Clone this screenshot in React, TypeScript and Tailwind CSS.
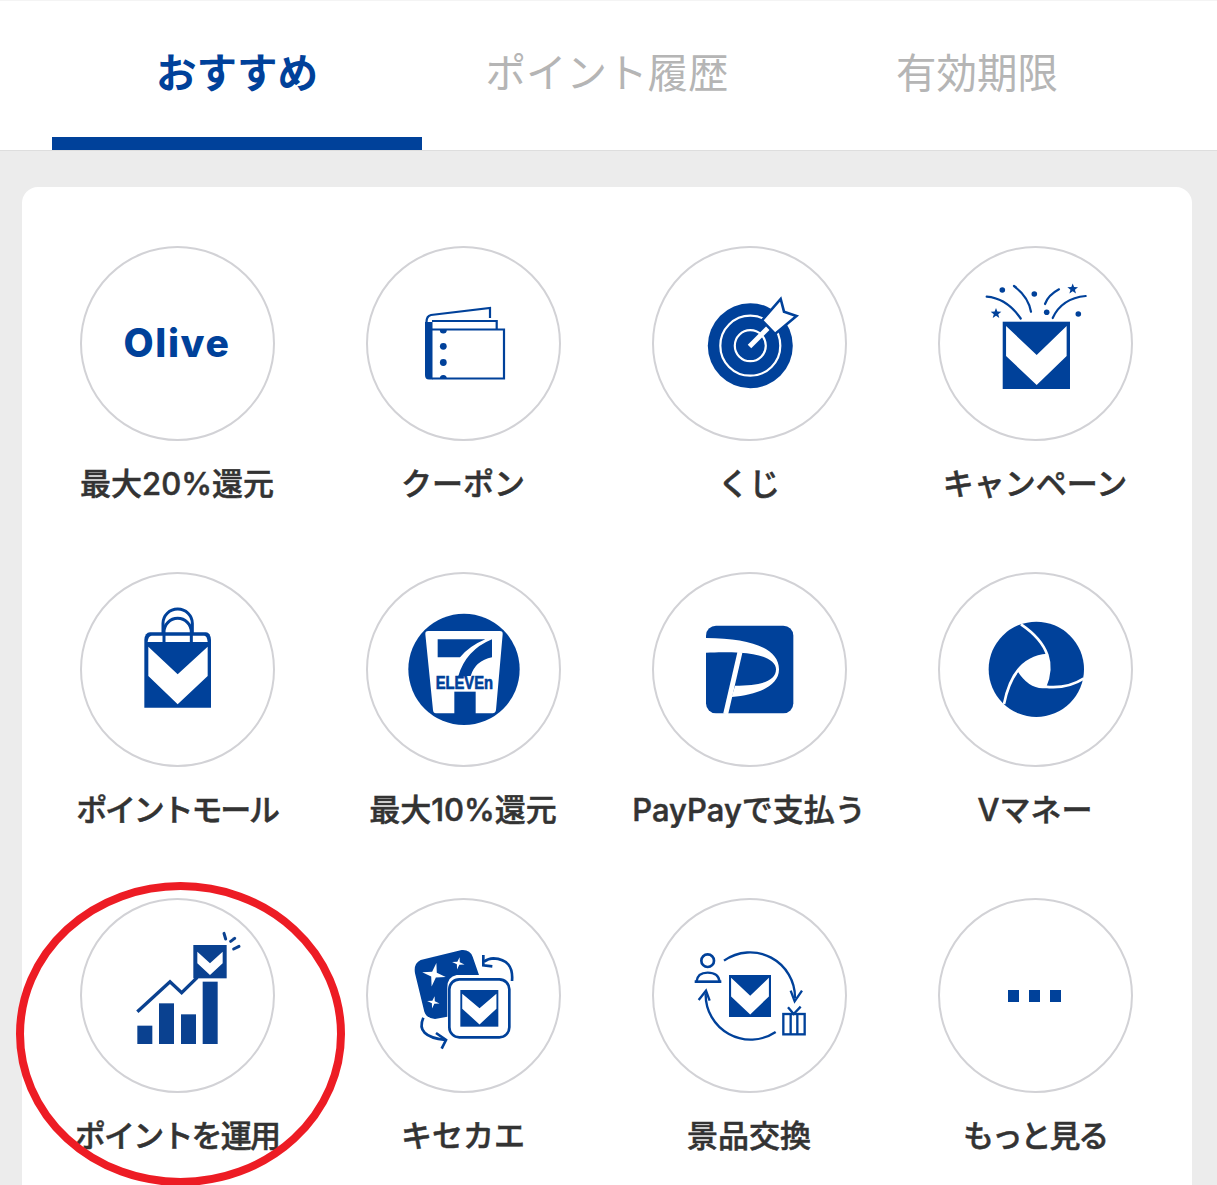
import React from "react";

const BLUE = "#00419a";

function Mark({ x, y, s }: { x: number; y: number; s: number }) {
  return (
    <g transform={`translate(${x} ${y}) scale(${s / 100})`}>
      <rect width="100" height="100" fill={BLUE} />
      <polygon points="5,6.5 50.5,49.5 95,6.5 95,51 50.5,94 5,51" fill="#fff" />
    </g>
  );
}

function Icon({ children, ox, oy, k = 3 }: { children: React.ReactNode; ox: number; oy: number; k?: number }) {
  return (
    <svg viewBox="0 0 195 195" className="absolute inset-0 h-full w-full">
      <g transform={`translate(${ox} ${oy}) scale(${1 / k})`}>{children}</g>
    </svg>
  );
}

function star(cx: number, cy: number, r: number, inner = 0.22) {
  const p: string[] = [];
  for (let i = 0; i < 8; i++) {
    const a = (Math.PI / 4) * i - Math.PI / 2 + 0.2;
    const rr = i % 2 === 0 ? r : r * inner;
    p.push(`${cx + rr * Math.cos(a)},${cy + rr * Math.sin(a)}`);
  }
  return p.join(" ");
}

function star5(cx: number, cy: number, r: number) {
  const p: string[] = [];
  for (let i = 0; i < 10; i++) {
    const a = (Math.PI / 5) * i - Math.PI / 2;
    const rr = i % 2 === 0 ? r : r * 0.42;
    p.push(`${cx + rr * Math.cos(a)},${cy + rr * Math.sin(a)}`);
  }
  return p.join(" ");
}

const Olive = () => (
  <div className="flex h-full w-full items-center justify-center">
    <span className="font-['Inter',sans-serif] text-[39px] font-extrabold tracking-[1.6px] text-[#00419a]">Olive</span>
  </div>
);

const Wallet = () => (
  <svg viewBox="366 246 195 195" className="absolute inset-0 h-full w-full">
    <g fill="none" stroke={BLUE} strokeWidth="2.2">
      <path d="M490 318 V308 L431 315 Q426.5 316 426.5 322 Q426.5 328 432 329" />
      <path d="M432 321 H496.7 V329" />
      <path d="M432 329.5 H504 V378.5 H432" />
    </g>
    <path d="M425 322 H432.5 V379.6 H429 Q425 379.6 425 375 Z" fill={BLUE} />
    <circle cx="443.3" cy="346.3" r="3.4" fill={BLUE} />
    <circle cx="443.3" cy="362.5" r="3.4" fill={BLUE} />
    <path d="M439.8 330 a3.5 3.5 0 0 0 7 0 Z M439.8 378.5 a3.5 3.5 0 0 1 7 0 Z" fill={BLUE} />
  </svg>
);

const Target = () => (
  <svg viewBox="652 246 195 195" className="absolute inset-0 h-full w-full">
    <circle cx="750.3" cy="345.7" r="42.5" fill={BLUE} />
    <circle cx="750.3" cy="345.7" r="30" fill="none" stroke="#fff" strokeWidth="2.2" />
    <circle cx="750.3" cy="345.7" r="15.5" fill="none" stroke="#fff" strokeWidth="2.2" />
    <path d="M763 333 L772 324" stroke={BLUE} strokeWidth="11" />
    <path d="M749.5 346.5 L770 326" stroke="#fff" strokeWidth="5" />
    <polygon points="780.7,299 784,311.7 796.5,316 775,334 762,320.5" fill="#fff" stroke={BLUE} strokeWidth="2.6" />
  </svg>
);

const Campaign = () => (
  <svg viewBox="938 246 195 195" className="absolute inset-0 h-full w-full">
    <Mark x={1002.7} y={321.7} s={67.3} />
    <g fill="none" stroke={BLUE} strokeWidth="2.2" strokeLinecap="round">
      <path d="M986.7 296.7 Q1006.7 298.3 1020.7 318.5" />
      <path d="M1014 286 Q1028.3 296.7 1031 311.7" />
      <path d="M1059 289.3 Q1048.3 295 1045 304" />
      <path d="M1085.7 296 Q1061.7 298.3 1052.7 318" />
    </g>
    <g fill={BLUE}>
      <circle cx="1002.3" cy="290" r="2.8" />
      <circle cx="1034.3" cy="294" r="2.8" />
      <circle cx="1046.7" cy="312.3" r="2.8" />
      <circle cx="1078.3" cy="314" r="2.8" />
      <polygon points={star5(996, 313.5, 5.6)} />
      <polygon points={star5(1072.7, 289, 5.6)} />
    </g>
  </svg>
);

const Bag = () => (
  <Icon ox={-20} oy={-2}>
    <path d="M253 210 Q255 187 270 187 H438 Q451 187 453 210 V413 H253 Z" fill={BLUE} />
    <path d="M263 216 Q265 197 275 197 H433 Q441 197 443 216 Z" fill="#fff" />
    <polygon points="265,230 353,313 443,230 443,318 353,403 265,318" fill="#fff" />
    <path d="M309 190 V160 A44 43 0 0 1 397 160 V190" fill="none" stroke={BLUE} strokeWidth="9" />
    <path d="M312 216 V186 A41 41 0 0 1 394 186 V216" fill="none" stroke={BLUE} strokeWidth="9" />
  </Icon>
);

const Seven = () => (
  <Icon ox={-306} oy={-2}>
    <circle cx="1212" cy="298" r="167" fill={BLUE} />
    <path d="M1105 183 H1319 Q1329 183 1328 193 L1308 420 Q1306 430 1298 430 H1128 Q1120 430 1119 420 L1096 193 Q1095 183 1105 183 Z" fill="#fff" />
    <path d="M1133 208 H1276 Q1228 228 1200 262 H1133 Z" fill={BLUE} />
    <path d="M1296 208 V262 Q1246 272 1232 318 H1195 Q1218 240 1296 208 Z" fill={BLUE} />
    <rect x="1183" y="365" width="64" height="70" fill={BLUE} />
    <text x="1127" y="358" textLength="172" lengthAdjust="spacingAndGlyphs" fontFamily="'Liberation Sans',sans-serif" fontWeight="700" fontSize="53" fill={BLUE} stroke={BLUE} strokeWidth="2">ELEVEn</text>
  </Icon>
);

const PayPay = () => (
  <Icon ox={-12} oy={-2}>
    <rect x="198" y="167" width="262" height="263" rx="30" fill={BLUE} />
    <path d="M198 204 C330 204 417 235 417 298 C417 350 350 375 275 381 L285 347 C360 347 408 335 408 298 C408 270 360 250 300 248 C270 246 230 246 198 248 Z" fill="#fff" />
    <path d="M300 246 L257 432" stroke="#fff" strokeWidth="15" fill="none" />
  </Icon>
);

const VMoney = () => (
  <Icon ox={-298} oy={-2}>
    <circle cx="1189" cy="298" r="143" fill={BLUE} />
    <path d="M1222 255 Q1237 300 1215 350 Q1170 355 1135 300 Q1160 262 1222 255 Z" fill="#fff" />
    <g fill="none" stroke="#fff" strokeWidth="8">
      <path d="M1143 163 Q1205 205 1222 255 Q1237 300 1215 350" />
      <path d="M1222 255 Q1120 262 1092 402" />
      <path d="M1135 300 Q1170 355 1215 350 Q1280 358 1332 325" />
    </g>
  </Icon>
);

const Invest = () => (
  <Icon ox={-80} oy={-28}>
    <g fill="#0a4190">
      <rect x="412" y="467" width="45" height="55" />
      <rect x="477" y="400" width="45" height="122" />
      <rect x="543" y="433" width="45" height="89" />
      <rect x="608" y="335" width="45" height="187" />
    </g>
    <path d="M412 425 L510 335 L545 368 L592 322" fill="none" stroke="#0a4190" strokeWidth="10" />
    <rect x="580" y="225" width="100" height="100" fill="#0a4190" />
    <polygon points="592,245 630,280 668,245 668,280 630,315 592,280" fill="#fff" />
    <g stroke="#0a4190" strokeWidth="9" strokeLinecap="round">
      <path d="M672 190 L677 207" />
      <path d="M704 205 L692 214" />
      <path d="M717 229 L701 237" />
    </g>
  </Icon>
);

const Kisekae = () => (
  <Icon ox={-6} oy={2}>
    <path d="M182 180 L305 150 Q330 148 338 170 L357 225 L290 225 Q262 230 262 262 L262 350 L225 357 Q200 355 193 335 L165 220 Q160 190 182 180 Z" fill={BLUE} />
    <polygon points={star(222, 224, 36, 0.28)} fill="#fff" />
    <polygon points={star(295, 190, 19, 0.28)} fill="#fff" />
    <polygon points={star(220, 307, 19, 0.28)} fill="#fff" />
    <rect x="268" y="238" width="180" height="174" rx="30" fill="#fff" stroke={BLUE} strokeWidth="8" />
    <g transform="translate(301 270) scale(1.14 1.1)">
      <rect width="100" height="100" fill={BLUE} />
      <polygon points="5,10 50.5,49.5 95,10 95,51 50.5,94 5,51" fill="#fff" />
    </g>
    <g fill="none" stroke={BLUE} strokeWidth="8">
      <path d="M456 243 Q462 178 400 175 Q385 175 372 185" />
      <path d="M370 165 L370 196 L397 199" />
      <path d="M190 353 Q165 410 256 420" />
      <path d="M228 399 L258 420 L245 446" />
    </g>
  </Icon>
);

const Exchange = () => (
  <Icon ox={-292} oy={2}>
    <circle cx="1043" cy="182" r="19" fill="none" stroke={BLUE} strokeWidth="8" />
    <path d="M1009 246 Q1012 218 1043 218 Q1076 218 1079 246" fill="none" stroke={BLUE} strokeWidth="7" />
    <rect x="1004" y="241" width="80" height="8" fill={BLUE} />
    <Mark x={1107} y={225} s={126} />
    <g fill="none" stroke={BLUE} strokeWidth="7">
      <path d="M1092 182 A135 135 0 0 1 1305 295" />
      <path d="M1292 272 L1304 304 L1326 272" />
      <path d="M1247 396 A135 135 0 0 1 1037 280" />
      <path d="M1016 300 L1038 272 L1049 302" />
      <rect x="1270" y="342" width="64" height="61" />
      <path d="M1292 342 V403 M1312 342 V403" />
      <path d="M1284 322 L1301 342 L1322 320" />
    </g>
  </Icon>
);

const More = () => (
  <div className="flex h-full w-full items-center justify-center gap-[10px] pr-[1px]">
    <span className="h-[12px] w-[11px] bg-[#00419a]" />
    <span className="h-[12px] w-[11px] bg-[#00419a]" />
    <span className="h-[12px] w-[11px] bg-[#00419a]" />
  </div>
);

const items: { label: string; cls: string; icon: React.ReactNode }[] = [
  { label: "最大20%還元", cls: "", icon: <Olive /> },
  { label: "クーポン", cls: "", icon: <Wallet /> },
  { label: "くじ", cls: "", icon: <Target /> },
  { label: "キャンペーン", cls: "", icon: <Campaign /> },
  { label: "ポイントモール", cls: "tracking-[-2.2px]", icon: <Bag /> },
  { label: "最大10%還元", cls: "", icon: <Seven /> },
  { label: "PayPayで支払う", cls: "", icon: <PayPay /> },
  { label: "Vマネー", cls: "", icon: <VMoney /> },
  { label: "ポイントを運用", cls: "tracking-[-1.8px]", icon: <Invest /> },
  { label: "キセカエ", cls: "", icon: <Kisekae /> },
  { label: "景品交換", cls: "", icon: <Exchange /> },
  { label: "もっと見る", cls: "tracking-[-2.2px]", icon: <More /> },
];

const tabs = ["おすすめ", "ポイント履歴", "有効期限"];

export default function App() {
  return (
    <div className="relative h-[1185px] w-[1217px] overflow-hidden bg-[#ececec] font-['Noto_Sans_CJK_JP',sans-serif]">
      <header className="flex h-[151px] border-t border-b border-t-[#f4f4f4] border-b-[#dedede] bg-white pl-[52px]">
        {tabs.map((t, i) => (
          <div
            key={t}
            className={
              i === 0
                ? "flex w-[370px] items-start justify-center border-b-[13px] border-[#00419a] pt-[45px] text-[40.5px] leading-[50px] font-bold text-[#00419a]"
                : "flex w-[370px] items-start justify-center pt-[45px] text-[40.5px] leading-[50px] text-[#b5b5b5]"
            }
          >
            {t}
          </div>
        ))}
      </header>
      <main className="pt-[36px] pl-[22px]">
        <div className="grid w-[1170px] grid-cols-4 gap-y-[68px] rounded-t-2xl bg-white pt-[59px] pr-[14px] pb-10 pl-[12px]">
          {items.map((it) => (
            <div key={it.label} className="flex flex-col items-center">
              <div className="relative h-[195px] w-[195px] rounded-full border-2 border-[#d2d2d6] bg-white">
                <div className="absolute inset-[-2px]">{it.icon}</div>
              </div>
              <div className={`mt-[23px] font-['Inter','Noto_Sans_CJK_JP',sans-serif] text-[31px] leading-[40px] font-medium whitespace-nowrap text-[#333] [-webkit-text-stroke:0.5px_#333] ${it.cls}`}>
                {it.label}
              </div>
            </div>
          ))}
        </div>
      </main>
      <svg className="pointer-events-none absolute top-0 left-0 h-[1185px] w-[1217px]" viewBox="0 0 1217 1185">
        <ellipse cx="180.5" cy="1034" rx="160.5" ry="148" fill="none" stroke="#ed1c24" strokeWidth="8" />
      </svg>
    </div>
  );
}
